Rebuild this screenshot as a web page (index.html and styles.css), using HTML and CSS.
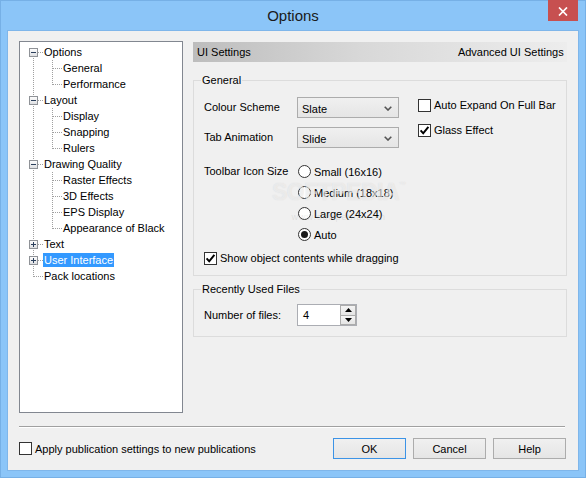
FILE: index.html
```html
<!DOCTYPE html>
<html>
<head>
<meta charset="utf-8">
<title>Options</title>
<link rel="stylesheet" href="styles.css">
</head>
<body>
<div class="window">
  <div class="titlebar">
    <span class="tb-spacer"></span>
    <div class="title">Options</div>
    <div class="close"><svg width="10" height="9" viewBox="0 0 10 9"><path d="M1 0.5 L9 8.5 M9 0.5 L1 8.5" stroke="#fff" stroke-width="1.7" fill="none"/></svg></div>
  </div>
  <div class="client">
    <div class="main">
      <div class="tree">
        <div class="row"><span class="ca first"><span class="exp minus"></span></span><span class="txt">Options</span></div>
        <div class="row"><span class="cv"></span><span class="cb"></span><span class="txt">General</span></div>
        <div class="row"><span class="cv"></span><span class="cb last"></span><span class="txt">Performance</span></div>
        <div class="row"><span class="ca"><span class="exp minus"></span></span><span class="txt">Layout</span></div>
        <div class="row"><span class="cv"></span><span class="cb"></span><span class="txt">Display</span></div>
        <div class="row"><span class="cv"></span><span class="cb"></span><span class="txt">Snapping</span></div>
        <div class="row"><span class="cv"></span><span class="cb last"></span><span class="txt">Rulers</span></div>
        <div class="row"><span class="ca"><span class="exp minus"></span></span><span class="txt">Drawing Quality</span></div>
        <div class="row"><span class="cv"></span><span class="cb"></span><span class="txt">Raster Effects</span></div>
        <div class="row"><span class="cv"></span><span class="cb"></span><span class="txt">3D Effects</span></div>
        <div class="row"><span class="cv"></span><span class="cb"></span><span class="txt">EPS Display</span></div>
        <div class="row"><span class="cv"></span><span class="cb last"></span><span class="txt">Appearance of Black</span></div>
        <div class="row"><span class="ca"><span class="exp plus"></span></span><span class="txt">Text</span></div>
        <div class="row sel"><span class="ca"><span class="exp plus"></span></span><span class="txt">User Interface</span></div>
        <div class="row"><span class="ca last"></span><span class="txt">Pack locations</span></div>
      </div>
      <div class="panel">
        <div class="phead"><span>UI Settings</span><span>Advanced UI Settings</span></div>
        <fieldset class="group general">
          <legend>General</legend>
          <div class="gbody">
            <div class="gleft">
              <div class="lbl">Colour Scheme</div>
              <div class="combo"><span>Slate</span><svg width="8" height="5" viewBox="0 0 8 5"><path d="M0.7 0.7 L4 4 L7.3 0.7" stroke="#555" stroke-width="1.6" fill="none"/></svg></div>
              <div class="lbl">Tab Animation</div>
              <div class="combo"><span>Slide</span><svg width="8" height="5" viewBox="0 0 8 5"><path d="M0.7 0.7 L4 4 L7.3 0.7" stroke="#555" stroke-width="1.6" fill="none"/></svg></div>
              <div class="lbl lbl-top">Toolbar Icon Size</div>
              <div class="radios">
                <div class="ropt"><span class="radio"></span>Small (16x16)</div>
                <div class="ropt"><span class="radio"></span>Medium (18x18)</div>
                <div class="ropt"><span class="radio"></span>Large (24x24)</div>
                <div class="ropt"><span class="radio on"></span>Auto</div>
              </div>
            </div>
            <div class="gright">
              <div class="check"><span class="box"></span>Auto Expand On Full Bar</div>
              <div class="check"><span class="box"><svg width="11" height="11" viewBox="0 0 11 11"><path d="M1.6 5.4 L4.2 8.3 L9.4 1.8" stroke="#000" stroke-width="2" fill="none"/></svg></span>Glass Effect</div>
            </div>
          </div>
          <div class="check drag"><span class="box"><svg width="11" height="11" viewBox="0 0 11 11"><path d="M1.6 5.4 L4.2 8.3 L9.4 1.8" stroke="#000" stroke-width="2" fill="none"/></svg></span>Show object contents while dragging</div>
        </fieldset>
        <fieldset class="group recent">
          <legend>Recently Used Files</legend>
          <div class="nrow">
            <div class="lbl">Number of files:</div>
            <div class="spin">
              <span class="spinval">4</span>
              <div class="spinbtns">
                <span class="sb"><svg width="7" height="4" viewBox="0 0 7 4"><path d="M0 4 L3.5 0 L7 4 Z" fill="#000"/></svg></span>
                <span class="sb"><svg width="7" height="4" viewBox="0 0 7 4"><path d="M0 0 L3.5 4 L7 0 Z" fill="#000"/></svg></span>
              </div>
            </div>
          </div>
        </fieldset>
      </div>
    </div>
    <div class="sep"></div>
    <div class="bottom">
      <div class="check"><span class="box"></span>Apply publication settings to new publications</div>
      <div class="buttons">
        <button class="btn default">OK</button>
        <button class="btn">Cancel</button>
        <button class="btn">Help</button>
      </div>
    </div>
  </div>
  <div class="watermark"><div class="wm-big">SOFTPEDIA<sup>™</sup></div><div class="wm-small">www.softpedia.com</div></div>
</div>
</body>
</html>
```
FILE: styles.css
```css
:root {
  --dotv: repeating-linear-gradient(to bottom, #a0a0a0 0 1px, transparent 1px 2px);
  --doth: repeating-linear-gradient(to right, #a0a0a0 0 1px, transparent 1px 2px);
}
* { box-sizing: border-box; }
html, body { margin: 0; padding: 0; }
body {
  width: 586px;
  height: 478px;
  overflow: hidden;
  font-family: "Liberation Sans", Arial, sans-serif;
  font-size: 11px;
  color: #000;
  background: #8bc5f8;
}
.window {
  position: relative;
  width: 586px;
  height: 478px;
  border: 1px solid #76b0e6;
  background: #8bc5f8;
  display: flex;
  flex-direction: column;
}
.titlebar {
  height: 30px;
  flex: none;
  display: grid;
  grid-template-columns: 1fr auto 1fr;
}
.title {
  font-size: 15px;
  line-height: 30px;
  color: #1a1a1a;
}
.close {
  justify-self: end;
  align-self: start;
  margin-top: -1px;
  margin-right: 7px;
  width: 30px;
  height: 21px;
  background: #c75050;
  display: flex;
  align-items: center;
  justify-content: center;
  padding-top: 2px;
}
.client {
  flex: 1;
  margin: 0 7px 7px 7px;
  background: #f0f0f0;
  box-shadow: 0 0 0 1px #7fb6ea;
  padding: 10px 12px 0 11px;
  display: flex;
  flex-direction: column;
}
.main {
  display: flex;
  gap: 10px;
  height: 372px;
}
/* tree */
.tree {
  width: 164px;
  flex: none;
  border: 1px solid #828790;
  background: #fff;
  padding-top: 2px;
}
.row {
  display: flex;
  height: 16px;
  align-items: flex-start;
}
.ca, .cv, .cb {
  flex: none;
  height: 16px;
  display: flex;
  align-items: flex-start;
}
.ca {
  width: 23px;
  background: var(--dotv) 13px 0 / 1px 16px no-repeat, var(--doth) 14px 8px / 9px 1px no-repeat;
}
.ca.first {
  background: var(--dotv) 13px 8px / 1px 8px no-repeat, var(--doth) 14px 8px / 9px 1px no-repeat;
}
.ca.last {
  background: var(--dotv) 13px 0 / 1px 9px no-repeat, var(--doth) 14px 8px / 9px 1px no-repeat;
}
.cv {
  width: 23px;
  background: var(--dotv) 13px 0 / 1px 16px no-repeat;
}
.cb {
  width: 19px;
  background: var(--dotv) 9px 0 / 1px 16px no-repeat, var(--doth) 10px 8px / 9px 1px no-repeat;
}
.cb.last {
  background: var(--dotv) 9px 0 / 1px 9px no-repeat, var(--doth) 10px 8px / 9px 1px no-repeat;
}
.exp {
  width: 9px;
  height: 9px;
  margin: 4px 0 0 9px;
  border: 1px solid #8f9297;
  background: linear-gradient(#fdfdfd, #dedfe2);
}
.exp.minus {
  background: linear-gradient(#2b3f5c, #2b3f5c) 1px 3px / 5px 1px no-repeat, linear-gradient(#fdfdfd, #dedfe2);
}
.exp.plus {
  background: linear-gradient(#2b3f5c, #2b3f5c) 1px 3px / 5px 1px no-repeat, linear-gradient(#2b3f5c, #2b3f5c) 3px 1px / 1px 5px no-repeat, linear-gradient(#fdfdfd, #dedfe2);
}
.txt {
  margin-top: 1px;
  height: 14px;
  line-height: 14px;
  padding: 0 1px;
  white-space: nowrap;
}
.sel .txt {
  background: #3399ff;
  color: #fff;
}
/* right panel */
.panel {
  flex: 1;
  display: flex;
  flex-direction: column;
}
.phead {
  margin-top: 1px;
  height: 20px;
  display: flex;
  justify-content: space-between;
  align-items: center;
  padding: 0 3px 0 4px;
  background: linear-gradient(to right, #bdbdbd, #d8d8d8 45%, #ededed);
}
.group {
  margin: 0;
  border: 1px solid #dcdcdc;
  padding: 0 10px 9px 10px;
  min-inline-size: 0;
}
.group legend {
  padding: 0 1px;
  margin-left: -3px;
  line-height: 16px;
}
.general {
  margin-top: 10px;
  padding-top: 9px;
}
.gbody {
  display: flex;
  align-items: flex-start;
}
.gleft {
  display: grid;
  grid-template-columns: 93px 102px;
  grid-auto-rows: auto;
  row-gap: 9px;
}
.lbl {
  line-height: 21px;
  white-space: nowrap;
}
.lbl-top, .radios {
  margin-top: 4px;
}
.combo {
  height: 21px;
  border: 1px solid #acacac;
  background: linear-gradient(#f0f0f0, #e5e5e5);
  display: flex;
  align-items: center;
  justify-content: space-between;
  padding: 2px 6px 0 4px;
}
.combo svg {
  margin-top: -1px;
}
.radios {
  display: flex;
  flex-direction: column;
  margin-left: 1px;
}
.ropt {
  height: 21px;
  display: flex;
  align-items: center;
  gap: 3px;
  white-space: nowrap;
}
.radio {
  width: 13px;
  height: 13px;
  border: 1px solid #333;
  border-radius: 50%;
  background: #fff;
  display: flex;
  align-items: center;
  justify-content: center;
}
.radio.on::after {
  content: "";
  width: 7px;
  height: 7px;
  border-radius: 50%;
  background: #1a1a1a;
}
.gright {
  margin-left: 19px;
  display: flex;
  flex-direction: column;
  gap: 9px;
}
.check {
  height: 16px;
  display: flex;
  align-items: center;
  gap: 3px;
  white-space: nowrap;
}
.box {
  width: 13px;
  height: 13px;
  flex: none;
  border: 1px solid #333;
  background: #fff;
  display: flex;
  align-items: center;
  justify-content: center;
}
.drag {
  margin-top: 5px;
}
.recent {
  margin-top: 5px;
  padding-top: 7px;
  padding-bottom: 10px;
}
.nrow {
  display: flex;
  align-items: center;
}
.nrow .lbl {
  width: 93px;
}
.spin {
  width: 60px;
  height: 22px;
  border: 1px solid #abadb3;
  background: #fff;
  display: flex;
  justify-content: space-between;
}
.spinval {
  padding-left: 5px;
  line-height: 20px;
}
.spinbtns {
  width: 16px;
  display: flex;
  flex-direction: column;
}
.sb {
  flex: 1;
  border: 1px solid #acacac;
  background: linear-gradient(#f4f4f4, #e4e4e4);
  display: flex;
  align-items: center;
  justify-content: center;
}
.sb + .sb {
  border-top: none;
}
/* bottom */
.sep {
  margin-top: 13px;
  margin-right: 1px;
  border-top: 1px solid #a0a0a0;
  border-bottom: 1px solid #fff;
}
.bottom {
  padding-top: 10px;
  display: flex;
  justify-content: space-between;
  align-items: center;
}
.buttons {
  display: flex;
  gap: 7px;
}
.btn {
  width: 73px;
  height: 21px;
  margin: 0;
  padding: 0;
  font-family: "Liberation Sans", Arial, sans-serif;
  font-size: 11px;
  color: #000;
  border: 1px solid #acacac;
  background: linear-gradient(#f0f0f0, #e5e5e5);
  border-radius: 0;
}
.btn.default {
  border-color: #3c93e6;
}
/* watermark (overlay, as in the reference screenshot) */
.watermark {
  position: absolute;
  left: 271px;
  top: 180px;
  pointer-events: none;
  text-align: center;
  line-height: 1;
}
.wm-big {
  font-family: "Liberation Sans", sans-serif;
  font-weight: bold;
  font-size: 23px;
  letter-spacing: -0.5px;
  color: rgba(255, 255, 255, 0.5);
  text-shadow: 0 0 1px rgba(150, 150, 150, 0.3);
}
.wm-big sup {
  font-size: 7px;
  vertical-align: top;
}
.wm-small {
  font-size: 9px;
  letter-spacing: 1px;
  color: rgba(150, 150, 150, 0.2);
  margin-top: 9px;
}
```
